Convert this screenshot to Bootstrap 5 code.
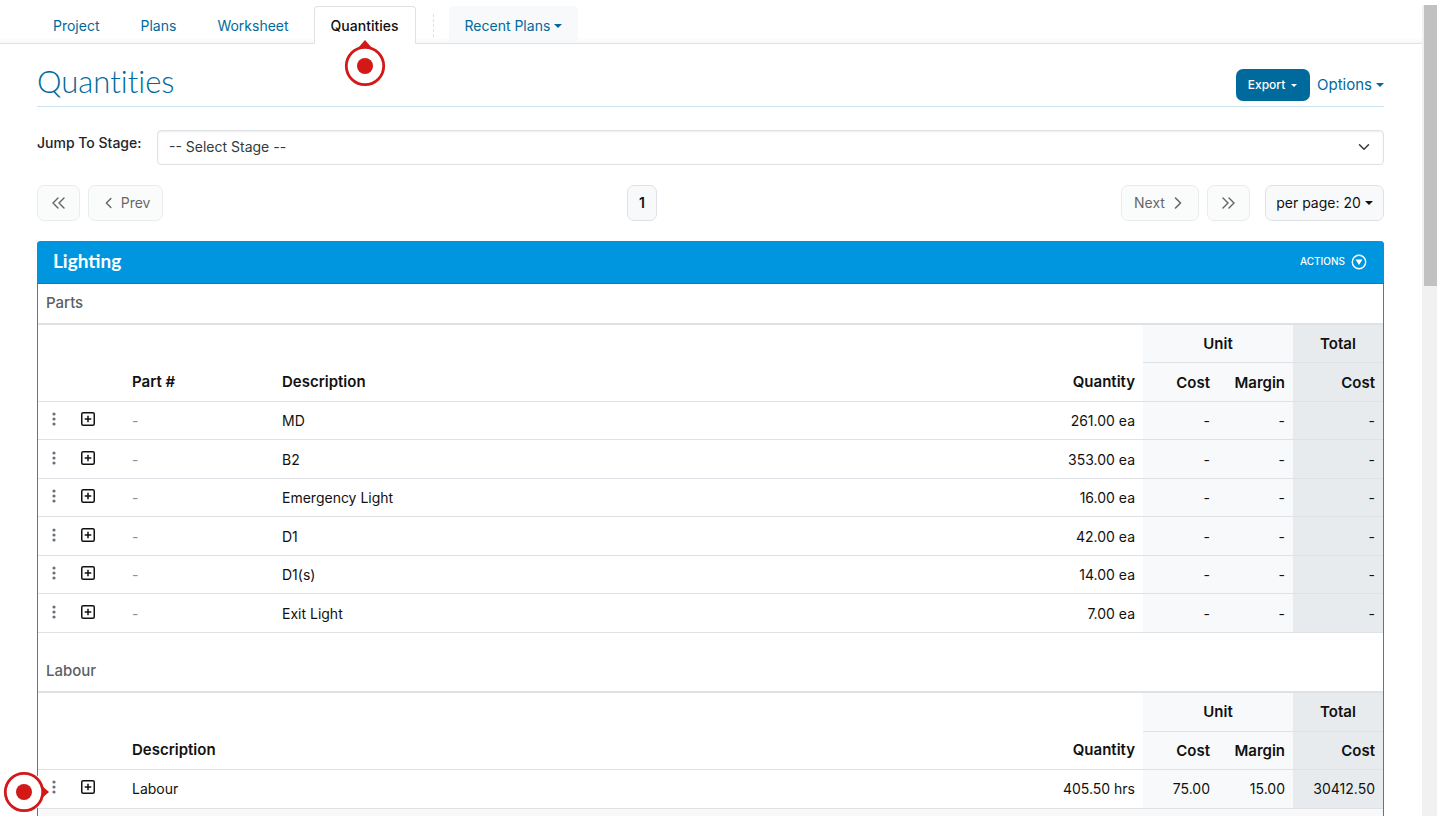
<!DOCTYPE html>
<html lang="en">
<head>
<meta charset="utf-8">
<meta name="viewport" content="width=device-width, initial-scale=1">
<title>Quantities</title>
<link href="https://cdn.jsdelivr.net/npm/bootstrap@5.3.0/dist/css/bootstrap.min.css" rel="stylesheet">
<style>
html { font-size: 15px; }
body { font-family: Inter, "Liberation Sans", sans-serif; font-size: 14px; color: #111; padding: 5px 3px 18px 0; }
a { color: #006a9c; text-decoration: none; }
.app-main { min-width: 0; }
.app-tabs { border-bottom: 1px solid #dee2e6; padding: 1px 37px 0; height: 39px; gap: 9px; background: linear-gradient(#fff 85%, #f8f8f9); }
.app-tabs .nav-link { height: 38px; padding: 0 15px; line-height: 37px; color: #006a9c; border: 1px solid transparent; border-radius: 4px 4px 0 0; margin: 0; }
.app-tabs .nav-link.active { padding: 0 16px; font-weight: 500; color: #111; border-color: #dee2e6 #dee2e6 #fff; background: #fff; }
.app-tabs .recent-tab { background: #f8f9fa; height: 37px; }
.tab-divider { border-left: 1px dashed #dee2e6; height: 23px; margin: 8px 6px 0 8px; }
.dropdown-toggle::after { margin-left: 4px; vertical-align: 3px; border-top-width: 4px; border-left-width: 4px; border-right-width: 4px; }
.pin { position: absolute; z-index: 5; display: block; pointer-events: none; }
.pin-up { top: 32px; left: 50%; margin-left: -21px; }
.pin-left { top: -1px; left: -36px; }
.content { padding: 0 38px 0 37px; }
.page-title { font-family: Lato, sans-serif; font-weight: 300; font-size: 31px; line-height: 40px; color: #006a9c; font-variant-ligatures: none; }
.title-row { border-bottom: 1px solid #cfe3ee; height: 63px; padding-top: 17px; }
.title-row a { font-size: 15px; line-height: 32px; margin-top: 8px; }
.btn-export { background: #006a9c; color: #fff; font-size: 12px; font-weight: 500; height: 32px; width: 74px; padding: 0; border-radius: 7px; margin-top: 8px; }
.btn-export:hover { background: #005a85; color: #fff; }
.btn-export::after { border-width: 3px; border-bottom: 0; margin-left: 6px; vertical-align: 2px; }
.stage-label { font-weight: 500; color: #212529; width: 120px; padding-top: 2px; }
.stage-select { height: 35px; font-size: 14px; padding: 0 36px 2px 11px; color: #343a40; border-color: #dee2e6; border-radius: 4px; box-shadow: inset 0 1px 2px rgba(0,0,0,.08); background-position: right 12px center; background-size: 14px 12px; }
.pager { margin: 20px 0; }
.btn-page { height: 36px; padding: 0 11px; font-size: 14px; color: #111; background: #f8f9fa; border: 1px solid #dee2e6; border-radius: 7px; display: inline-flex; align-items: center; justify-content: center; }
.btn-page:disabled { color: #111; background: #f8f9fa; border-color: #dee2e6; opacity: .65; }
.w-jump { width: 43px; }
.w-prev { width: 75px; gap: 9px; padding: 0 11px 0 16px; }
.w-next { width: 78px; gap: 9px; padding: 0 16px 0 11px; }
.w-size { width: 119px; }
.stage-card { border: 1px solid #0096df; border-top: 0; border-bottom: 0; border-radius: 4px 4px 0 0; }
.stage-head { background: #0096df; border-bottom: 1px solid #0080c0; color: #fff; height: 43px; padding: 0 17px 0 16px; margin: 0 -1px; border-radius: 4px 4px 0 0; }
.stage-head h2 { font-family: Lato, sans-serif; font-weight: 700; font-size: 19px; }
.btn-actions { color: #fff; font-size: 10px; font-weight: 500; padding: 0; border: 0; background: none; gap: 6px; }
.qty-table { table-layout: fixed; margin: 0; --bs-table-bg: transparent; --bs-table-color: #111; border-color: #dee2e6; }
.qty-table caption { caption-side: top; font-size: 15px; line-height: 22px; font-weight: 500; color: #5c5f62; padding: 8px 8px 9px; }
.qty-table thead tr:first-child th { border-top: 2px solid #dee2e6; }
.qty-table thead tr { height: 39px; }
.qty-table.labour thead tr:last-child { height: 38px; }
.qty-table th { font-size: 15px; font-weight: 600; }
.qty-table > :not(caption) > * > * { padding: 7px 8px; line-height: 23px; vertical-align: middle; }
.qty-table tbody tr { height: 38px; }
.qty-table tbody tr:nth-child(even), .labour tbody tr:last-child { height: 39px; }
.qty-table > tbody > tr > td { padding-top: 0; padding-bottom: 0; }
.qty-table .num { text-align: right; }
.qty-table .unit { background: #f8f9fb; }
.qty-table .total { background: #e8ebee; }
.qty-table .none { color: #8b9095; }
.labour { margin-top: 19px; }
.row-btn { background: none; border: 0; padding: 0 0 3px; display: flex; }
.menu-btn { padding-left: 6px; }
.c-menu { width: 35px; } .c-open { width: 51px; } .c-part { width: 150px; } .c-qty { width: 120px; } .c-unit { width: 75px; } .c-total { width: 90px; }
.next-strip { background: #f8f8f8; min-height: 5px; }
.scroll-track { width: 15px; background: #f1f1f1; padding-left: 2px; }
.scroll-thumb { background: #c1c1c1; height: 281px; }
</style>
</head>
<body class="d-flex min-vh-100">
<svg class="d-none" aria-hidden="true">
  <symbol id="dots" viewBox="0 0 4 14"><g fill="#69727a"><circle cx="2" cy="2" r="1.6"/><circle cx="2" cy="7" r="1.6"/><circle cx="2" cy="12" r="1.6"/></g></symbol>
  <symbol id="plus" viewBox="0 0 14 14"><rect x=".75" y=".75" width="12.5" height="12.5" rx="1.5" fill="none" stroke="#111" stroke-width="1.5"/><path d="M7 3.7v6.6M3.7 7h6.6" stroke="#111" stroke-width="1.5"/></symbol>
  <symbol id="left" viewBox="0 0 8 12"><path d="M6.5 1 1.5 6l5 5" fill="none" stroke="#111" stroke-width="1.5" stroke-linecap="round"/></symbol>
  <symbol id="right" viewBox="0 0 8 12"><path d="m1.5 1 5 5-5 5" fill="none" stroke="#111" stroke-width="1.5" stroke-linecap="round"/></symbol>
  <symbol id="first" viewBox="0 0 13 12"><path d="M6 1 1 6l5 5M12 1 7 6l5 5" fill="none" stroke="#111" stroke-width="1.4" stroke-linecap="round"/></symbol>
  <symbol id="last" viewBox="0 0 13 12"><path d="m1 1 5 5-5 5M7 1l5 5-5 5" fill="none" stroke="#111" stroke-width="1.4" stroke-linecap="round"/></symbol>
</svg>
<div class="app-main flex-grow-1 d-flex flex-column">
  <nav class="app-tabs nav flex-nowrap" aria-label="Sections">
    <a class="nav-link" href="#">Project</a>
    <a class="nav-link" href="#">Plans</a>
    <a class="nav-link" href="#">Worksheet</a>
    <a class="nav-link active position-relative" href="#" aria-current="page">Quantities
      <svg class="pin pin-up" width="42" height="48" viewBox="0 0 42 48"><path d="M21 1l7 8H14z" fill="#d31818"/><circle cx="21" cy="27" r="18.7" fill="#fff" stroke="#d31818" stroke-width="2.8"/><circle cx="21" cy="27" r="8" fill="#d31818"/></svg>
    </a>
    <div class="tab-divider"></div>
    <a class="nav-link recent-tab dropdown-toggle" href="#" role="button">Recent Plans</a>
  </nav>
  <main class="content flex-grow-1 d-flex flex-column">
    <div class="title-row d-flex align-items-start">
      <h1 class="page-title m-0 me-auto">Quantities</h1>
      <button type="button" class="btn btn-export dropdown-toggle me-2">Export</button>
      <a class="dropdown-toggle" href="#" role="button">Options</a>
    </div>
    <div class="d-flex mt-4">
      <label class="stage-label flex-shrink-0" for="stage">Jump To Stage:</label>
      <select id="stage" class="form-select stage-select"><option>-- Select Stage --</option></select>
    </div>
    <div class="d-flex justify-content-between pager">
      <div class="d-flex gap-2">
        <button type="button" class="btn-page w-jump" disabled aria-label="First page"><svg width="13" height="12"><use href="#first"/></svg></button>
        <button type="button" class="btn-page w-prev" disabled><svg width="8" height="12"><use href="#left"/></svg>Prev</button>
      </div>
      <button type="button" class="btn-page fw-semibold">1</button>
      <div class="d-flex gap-2">
        <button type="button" class="btn-page w-next" disabled>Next<svg width="8" height="12"><use href="#right"/></svg></button>
        <button type="button" class="btn-page w-jump" disabled aria-label="Last page"><svg width="13" height="12"><use href="#last"/></svg></button>
        <button type="button" class="btn-page w-size dropdown-toggle ms-2">per page: 20</button>
      </div>
    </div>
    <section class="stage-card flex-grow-1 d-flex flex-column">
      <header class="stage-head d-flex align-items-center justify-content-between">
        <h2 class="m-0">Lighting</h2>
        <button type="button" class="btn-actions d-flex align-items-center">ACTIONS
          <svg width="16" height="16" viewBox="0 0 16 16"><circle cx="8" cy="8" r="6.7" fill="none" stroke="#fff" stroke-width="1.4"/><path d="M4.6 5.5h6.8L8 11z" fill="#fff"/></svg></button>
      </header>
      <table class="table qty-table">
        <caption>Parts</caption>
        <colgroup><col class="c-menu"><col class="c-open"><col class="c-part"><col><col class="c-qty"><col class="c-unit"><col class="c-unit"><col class="c-total"></colgroup>
        <thead>
          <tr><th class="border-bottom-0" colspan="5"></th><th class="unit text-center" colspan="2">Unit</th><th class="total text-center">Total</th></tr>
          <tr><th></th><th></th><th>Part #</th><th>Description</th><th class="num">Quantity</th><th class="num unit">Cost</th><th class="num unit">Margin</th><th class="num total">Cost</th></tr>
        </thead>
        <tbody id="parts"></tbody>
      </table>
      <table class="table qty-table labour">
        <caption>Labour</caption>
        <colgroup><col class="c-menu"><col class="c-open"><col><col class="c-qty"><col class="c-unit"><col class="c-unit"><col class="c-total"></colgroup>
        <thead>
          <tr><th class="border-bottom-0" colspan="4"></th><th class="unit text-center" colspan="2">Unit</th><th class="total text-center">Total</th></tr>
          <tr><th></th><th></th><th>Description</th><th class="num">Quantity</th><th class="num unit">Cost</th><th class="num unit">Margin</th><th class="num total">Cost</th></tr>
        </thead>
        <tbody>
          <tr>
            <td class="position-relative"><button type="button" class="row-btn menu-btn" aria-label="Row menu"><svg width="4" height="14"><use href="#dots"/></svg></button>
              <svg class="pin pin-left" width="48" height="46" viewBox="0 0 48 46"><circle cx="22" cy="23" r="21" fill="#fff"/><path d="M47 23l-8-7v14z" fill="#d31818"/><circle cx="22" cy="23" r="18.7" fill="#fff" stroke="#d31818" stroke-width="2.8"/><circle cx="22" cy="23" r="8" fill="#d31818"/></svg></td>
            <td><button type="button" class="row-btn" aria-label="Expand row"><svg width="14" height="14"><use href="#plus"/></svg></button></td>
            <td>Labour</td><td class="num">405.50 hrs</td><td class="num unit">75.00</td><td class="num unit">15.00</td><td class="num total">30412.50</td>
          </tr>
        </tbody>
      </table>
      <div class="next-strip flex-grow-1"></div>
    </section>
  </main>
</div>
<div class="scroll-track flex-shrink-0" aria-hidden="true"><div class="scroll-thumb"></div></div>
<script>
const parts = [["MD","261.00"],["B2","353.00"],["Emergency Light","16.00"],["D1","42.00"],["D1(s)","14.00"],["Exit Light","7.00"]];
document.getElementById("parts").innerHTML = parts.map(([name, qty]) => `<tr>
<td><button type="button" class="row-btn menu-btn" aria-label="Row menu"><svg width="4" height="14"><use href="#dots"/></svg></button></td>
<td><button type="button" class="row-btn" aria-label="Expand row"><svg width="14" height="14"><use href="#plus"/></svg></button></td>
<td class="none">-</td><td>${name}</td><td class="num">${qty} ea</td><td class="num unit">-</td><td class="num unit">-</td><td class="num total">-</td></tr>`).join("");
</script>
<script src="https://cdn.jsdelivr.net/npm/bootstrap@5.3.0/dist/js/bootstrap.bundle.min.js"></script>
</body>
</html>
